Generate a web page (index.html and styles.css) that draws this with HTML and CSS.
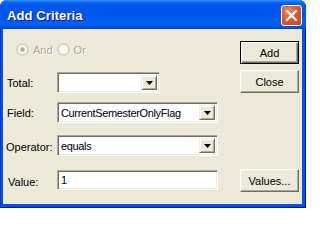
FILE: index.html
```html
<!DOCTYPE html>
<html>
<head>
<meta charset="utf-8">
<link rel="stylesheet" href="styles.css">
</head>
<body>
<div class="window">
  <div class="titlebar">
    <span class="title">Add Criteria</span>
    <div class="close">
      <svg width="21" height="21" viewBox="0 0 21 21"><path d="M6 6 L15 15 M15 6 L6 15" stroke="#fff" stroke-width="2.2" stroke-linecap="square"/></svg>
    </div>
  </div>
  <div class="client">
    <div class="radios">
      <span class="radio"><svg width="13" height="13" viewBox="0 0 13 13"><circle cx="6.5" cy="6.5" r="5.5" fill="#F5F4EF" stroke="#BDB9A6"/><circle cx="6.5" cy="6.5" r="2.2" fill="#B5B19F"/></svg><span class="rlabel">And</span></span>
      <span class="radio"><svg width="13" height="13" viewBox="0 0 13 13"><circle cx="6.5" cy="6.5" r="5.5" fill="#F5F4EF" stroke="#BDB9A6"/></svg><span class="rlabel">Or</span></span>
    </div>
    <div class="btn default b-add">Add</div>

    <div class="label l-total">Total:</div>
    <div class="combo c-total"><span class="val"></span><span class="drop"><svg width="7" height="4" viewBox="0 0 7 4"><path d="M0 0H7L3.5 4Z" fill="#000"/></svg></span></div>
    <div class="btn b-close">Close</div>

    <div class="label l-field">Field:</div>
    <div class="combo c-field"><span class="val">CurrentSemesterOnlyFlag</span><span class="drop"><svg width="7" height="4" viewBox="0 0 7 4"><path d="M0 0H7L3.5 4Z" fill="#000"/></svg></span></div>

    <div class="label l-op">Operator:</div>
    <div class="combo c-op"><span class="val">equals</span><span class="drop"><svg width="7" height="4" viewBox="0 0 7 4"><path d="M0 0H7L3.5 4Z" fill="#000"/></svg></span></div>

    <div class="label l-value">Value:</div>
    <div class="input c-value"><span class="val">1</span></div>
    <div class="btn b-values">Values...</div>
  </div>
</div>
</body>
</html>
```
FILE: styles.css
```css
html, body {
  margin: 0;
  padding: 0;
  background: #ffffff;
}
body {
  font-family: "Liberation Sans", Arial, sans-serif;
  font-size: 11px;
  color: #000;
}
.window {
  width: 306px;
  height: 208px;
  display: flex;
  flex-direction: column;
  background: #0055E5;
  border-radius: 7px 7px 0 0;
  box-shadow: inset 1px 0 #0831D9, inset -1px -1px #00138C;
  overflow: hidden;
}
.titlebar {
  height: 29px;
  flex: none;
  display: flex;
  align-items: center;
  justify-content: space-between;
  background: linear-gradient(#3D95FF 0px, #0A6AF6 2px, #0058EE 5px, #0055EA 14px, #0060F6 24px, #0058EC 26px, #0046D6 28px, #0046D6 29px);
  border-radius: 7px 7px 0 0;
}
.title {
  padding-left: 7px;
  padding-top: 2px;
  font-weight: bold;
  font-size: 13px;
  color: #fff;
  text-shadow: 1px 1px 0 #0A1883;
  letter-spacing: 0.1px;
}
.close {
  width: 21px;
  height: 21px;
  margin-right: 4px;
  margin-top: 2px;
  box-sizing: border-box;
  border: 1px solid #fff;
  border-radius: 3px;
  background: radial-gradient(circle at 35% 30%, #EE8A64 0%, #DA5A30 45%, #C8441A 100%);
  display: flex;
  align-items: center;
  justify-content: center;
}
.close svg {
  display: block;
  margin: -1px;
}
.client {
  flex: 1;
  margin: 0 4px 4px 3px;
  background: #ECE9D8;
  box-sizing: border-box;
  padding: 12px 3px 0 4px;
  display: grid;
  grid-template-columns: 50px 103px 58px 1fr 59px;
  grid-template-rows: 23px 29px 30px 33px 36px;
}
.radios {
  grid-column: 1 / 4;
  grid-row: 1;
  display: flex;
  align-items: center;
  height: 13px;
  margin-top: 2px;
  padding-left: 9px;
}
.radio {
  display: flex;
  align-items: center;
  margin-right: 4px;
}
.radio svg {
  display: block;
}
.rlabel {
  margin-left: 4px;
  color: #ACA899;
  text-shadow: 1px 1px 0 #fff;
}
.btn {
  grid-column: 5;
  align-self: end;
  height: 23px;
  box-sizing: border-box;
  display: flex;
  align-items: center;
  justify-content: center;
  background: #ECE9D8;
  border: 1px solid;
  border-color: #fff #716F64 #716F64 #fff;
  box-shadow: inset -1px -1px #ACA899, inset 1px 1px #F1EFE2;
}
.btn.default {
  border: 1px solid #000;
  box-shadow: inset 1px 1px #fff, inset -1px -1px #716F64, inset -2px -2px #ACA899;
}
.b-add { grid-row: 1; }
.b-close { grid-row: 2; }
.b-values { grid-row: 5; }
.label {
  grid-column: 1;
  align-self: end;
  height: 21px;
  display: flex;
  align-items: center;
}
.l-total { grid-row: 2; padding-top: 1px; }
.l-field { grid-row: 3; }
.l-op { grid-row: 4; margin-left: -1px; padding-top: 2px; box-sizing: border-box; }
.l-value { grid-row: 5; margin-left: 1px; height: 23px; padding-top: 3px; box-sizing: border-box; }
.combo, .input {
  align-self: end;
  height: 21px;
  box-sizing: border-box;
  background: #fff;
  border: 1px solid;
  border-color: #ACA899 #fff #fff #ACA899;
  box-shadow: inset 1px 1px #716F64, inset -1px -1px #F1EFE2;
  padding: 2px;
  display: flex;
  align-items: stretch;
}
.val {
  flex: 1;
  display: flex;
  align-items: center;
  padding-left: 1px;
  letter-spacing: -0.35px;
  white-space: nowrap;
  overflow: hidden;
}
.drop {
  width: 16px;
  flex: none;
  box-sizing: border-box;
  background: #ECE9D8;
  border: 1px solid;
  border-color: #F1EFE2 #716F64 #716F64 #F1EFE2;
  box-shadow: inset 1px 1px #fff, inset -1px -1px #ACA899;
  display: flex;
  align-items: center;
  justify-content: center;
}
.drop svg {
  display: block;
  margin-top: 1px;
}
.c-total { grid-column: 2; grid-row: 2; }
.c-field { grid-column: 2 / 4; grid-row: 3; }
.c-op { grid-column: 2 / 4; grid-row: 4; }
.c-value { grid-column: 2 / 4; grid-row: 5; height: 20px; margin-bottom: 2px; }
```
